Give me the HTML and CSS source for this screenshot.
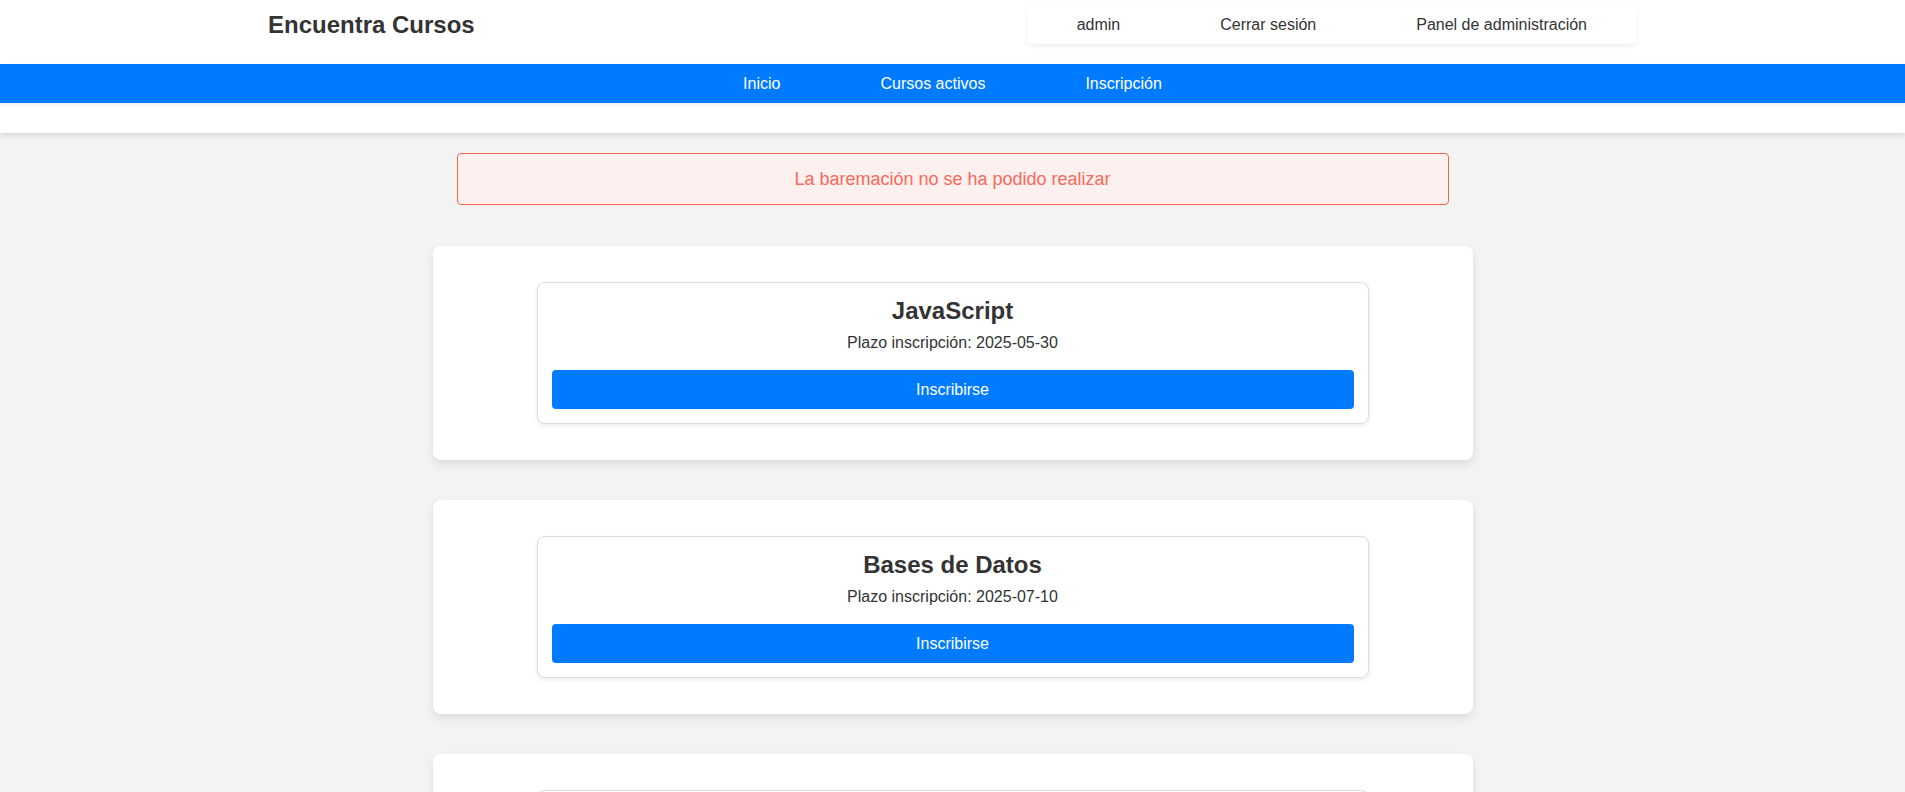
FILE: index.html
```html
<!DOCTYPE html>
<html lang="es">
<head>
<meta charset="utf-8">
<title>Encuentra Cursos</title>
<link rel="stylesheet" href="styles.css">
</head>
<body>
<header class="site-header">
  <div class="top-row">
    <h1 class="brand">Encuentra Cursos</h1>
    <ul class="user-menu">
      <li>admin</li>
      <li>Cerrar sesión</li>
      <li>Panel de administración</li>
    </ul>
  </div>
  <nav class="main-nav">
    <a href="#">Inicio</a>
    <a href="#">Cursos activos</a>
    <a href="#">Inscripción</a>
  </nav>
</header>
<main class="content">
  <div class="alert">La baremación no se ha podido realizar</div>
  <section class="course-wrap">
    <div class="course-card">
      <h2>JavaScript</h2>
      <p>Plazo inscripción: 2025-05-30</p>
      <button class="btn">Inscribirse</button>
    </div>
  </section>
  <section class="course-wrap">
    <div class="course-card">
      <h2>Bases de Datos</h2>
      <p>Plazo inscripción: 2025-07-10</p>
      <button class="btn">Inscribirse</button>
    </div>
  </section>
  <section class="course-wrap">
    <div class="course-card">
      <h2>Python</h2>
      <p>Plazo inscripción: 2025-09-15</p>
      <button class="btn">Inscribirse</button>
    </div>
  </section>
</main>
</body>
</html>
```
FILE: styles.css
```css
* { box-sizing: border-box; }
html, body {
  margin: 0;
  padding: 0;
}
body {
  background: #f3f3f3;
  color: #333;
  font-family: "Liberation Sans", Arial, sans-serif;
  font-size: 16px;
}
.site-header {
  background: #fff;
  padding: 5px 0 30px;
  box-shadow: 0 2px 6px rgba(0, 0, 0, 0.12);
}
.top-row {
  width: 1369px;
  margin: 0 auto;
  display: flex;
  align-items: center;
  justify-content: space-between;
  height: 39px;
}
.brand {
  margin: 0;
  font-size: 24px;
  font-weight: bold;
  color: #333;
  line-height: 28px;
}
.user-menu {
  list-style: none;
  margin: 0;
  padding: 0;
  display: flex;
  background: #fff;
  border-radius: 5px;
  box-shadow: 0 2px 5px rgba(0, 0, 0, 0.08);
}
.user-menu li {
  padding: 10px 50px;
  line-height: 19px;
  color: #333;
}
.main-nav {
  margin-top: 20px;
  background: #007bff;
  display: flex;
  justify-content: center;
  box-shadow: 0 2px 4px rgba(0, 0, 0, 0.08);
}
.main-nav a {
  color: #fff;
  text-decoration: none;
  padding: 10px 50px;
  line-height: 19px;
}
.content {
  width: 1040px;
  margin: 0 auto;
  padding-top: 20px;
}
.alert {
  width: 992px;
  margin: 0 auto 41px;
  height: 52px;
  display: flex;
  align-items: center;
  justify-content: center;
  background: #fff0f0;
  border: 1px solid #f6664c;
  border-radius: 4px;
  color: #f66a5a;
  font-size: 18px;
}
.course-wrap {
  background: #fff;
  border-radius: 8px;
  box-shadow: 0 4px 8px rgba(0, 0, 0, 0.1);
  padding: 36px 104px;
  margin-bottom: 40px;
}
.course-card {
  background: #fff;
  border: 1px solid #dcdcdc;
  border-radius: 8px;
  box-shadow: 0 2px 5px rgba(0, 0, 0, 0.08);
  padding: 14px;
  text-align: center;
}
.course-card h2 {
  margin: 0 0 9px;
  font-size: 24px;
  line-height: 28px;
  font-weight: bold;
  color: #333;
}
.course-card p {
  margin: 0 0 18px;
  line-height: 18px;
  color: #333;
}
.btn {
  display: block;
  width: 100%;
  height: 39px;
  border: none;
  border-radius: 4px;
  background: #007bff;
  color: #fff;
  font-family: inherit;
  font-size: 16px;
}
```
